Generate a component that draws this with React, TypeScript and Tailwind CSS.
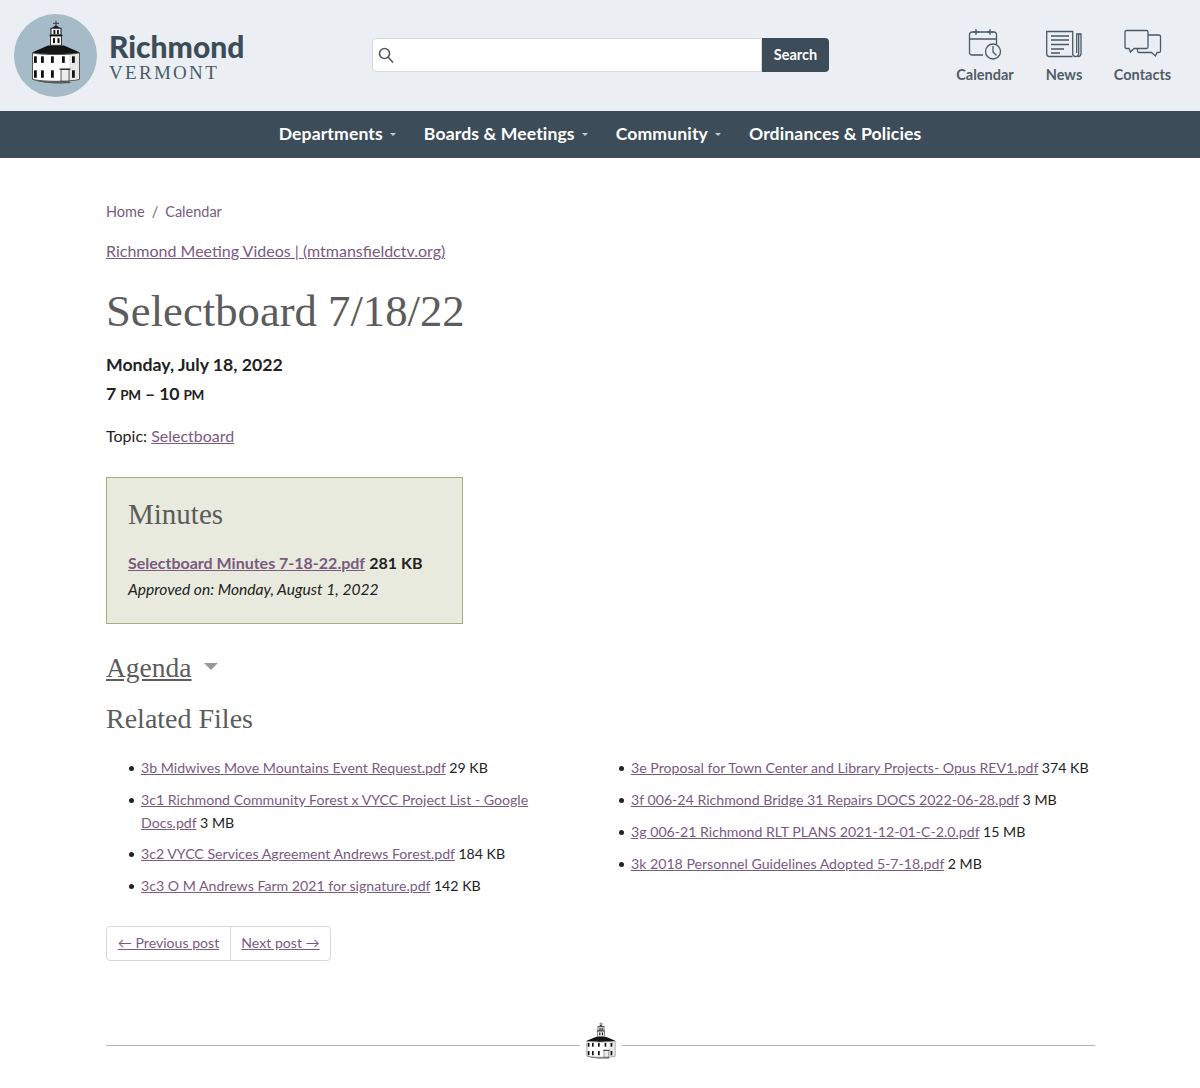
const serif = "font-['Liberation_Serif',serif]"

function MeetingHouse({ className }: { className?: string }) {
  return (
    <svg viewBox="0 0 50 80" preserveAspectRatio="none" className={className}>
      <path d="M25 1v6M22 4h6" stroke="#333" strokeWidth="1" fill="none" />
      <path d="M20.5 10 25 6l4.500 4z" fill="#222" />
      <rect x="20" y="10" width="10" height="8" fill="#f4f4f4" stroke="#111" strokeWidth="1" />
      <rect x="22.500" y="12" width="1.800" height="5" fill="#111" />
      <rect x="26" y="12" width="1.800" height="5" fill="#111" />
      <rect x="18.500" y="18" width="13" height="1.500" fill="#111" />
      <rect x="19.500" y="19.500" width="11" height="11" fill="#f8f8f8" stroke="#111" strokeWidth="0.800" />
      <rect x="22" y="22" width="2" height="6" fill="#111" />
      <rect x="26.500" y="22" width="2" height="6" fill="#111" />
      <path d="M1 39.500 17 31h16l16 8.500c-8 2.500-40 2.500-48 0z" fill="#151515" />
      <path d="M1.500 40c8 2.500 39 2.500 47 0v32c-10 3-37 3-47 0z" fill="#fff" stroke="#222" strokeWidth="0.800" />
      <path d="M38 43v30l10-2V41z" fill="#ddd" opacity="0.700" />
      {[3, 10, 20, 31, 41].map((x) => (
        <rect key={x} x={x} y="44" width="2.800" height="8" fill="#111" />
      ))}
      {[3, 10, 20, 41].map((x) => (
        <rect key={x} x={x} y="61" width="2.800" height="9" fill="#111" />
      ))}
      <path d="M30 60h8v14h-8z" fill="#eee" stroke="#222" strokeWidth="0.800" />
      <path d="M28.500 59.500h11" stroke="#111" strokeWidth="1.400" />
      <path d="M2 72c10 3 26 3 36 2l2 2.500c-12 1-30 .500-38-4.500z" fill="#555" />
    </svg>
  )
}

function CalendarIcon() {
  return (
    <svg viewBox="0 0 34 32" className="h-8 w-[34px] fill-none stroke-[#4a5a66] stroke-[1.300]">
      <path d="M15 27H4a2.500 2.500 0 0 1-2.500-2.500V6.500A2.500 2.500 0 0 1 4 4h22a2.500 2.500 0 0 1 2.500 2.500V16" />
      <path d="M1.500 11h27M8 1v6M22 1v6M5 4h6M19 4h6" />
      <circle cx="25" cy="23.500" r="7.500" />
      <path d="M25 18v6l3.500 3.500" />
    </svg>
  )
}

function NewsIcon() {
  return (
    <svg viewBox="0 0 36 30" className="h-[30px] w-9 fill-none stroke-[#4a5a66] stroke-[1.300]">
      <path d="M26.500 27.500H3A2.500 2.500 0 0 1 .700 25V2.500h26v22a3.200 3.200 0 0 0 3 3.200 3.200 3.200 0 0 0 3-3.200V5h-2v19" />
      <path d="M33 5h2v19.500a3.300 3.300 0 0 1-3 3.200" />
      <path d="M5 7h18M5 11h18M5 15.500h18M5 20h13M5 24h9" strokeWidth="1.500" />
    </svg>
  )
}

function ChatIcon() {
  return (
    <svg viewBox="0 0 38 30" className="h-[30px] w-[38px] fill-none stroke-[#4a5a66] stroke-[1.300]">
      <path d="M2.500 1.500h20a1.500 1.500 0 0 1 1.500 1.500v15a1.500 1.500 0 0 1-1.500 1.500H10l-3.500 3.500-1.500-3.500H2.500A1.500 1.500 0 0 1 1 18V3a1.500 1.500 0 0 1 1.500-1.500z" />
      <path d="M24 6h11a1.500 1.500 0 0 1 1.500 1.500V22a1.500 1.500 0 0 1-1.500 1.500h-2l-1.500 3.500-4-3.500H15a1.500 1.500 0 0 1-1.500-1.500v-2.500" />
    </svg>
  )
}

function Logo() {
  return (
    <div className="flex items-center">
      <div className="flex h-[83px] w-[83px] items-center justify-center rounded-full bg-[#a5bbc7]">
        <MeetingHouse className="mb-[5px] h-[66px] w-[50px]" />
      </div>
      <div className="ml-3 flex flex-col pt-[3px]">
        <span className="text-[30px] leading-[30px] font-black text-[#3c4c58]">Richmond</span>
        <span className={`${serif} mt-[2px] text-[19px] leading-[20px] tracking-[2.3px] text-[#4a5a66]`}>VERMONT</span>
      </div>
    </div>
  )
}

function HeaderLink({ icon, label, width }: { icon: React.ReactNode; label: string; width: string }) {
  return (
    <a className={`flex flex-col items-center ${width}`}>
      <span className="mt-[1px] flex h-[34px] items-center">{icon}</span>
      <span className="mt-[4px] text-[14.5px] leading-[20px] font-bold text-[#505d68]">{label}</span>
    </a>
  )
}

function NavItem({ label, caret = true }: { label: string; caret?: boolean }) {
  return (
    <a className="flex items-center text-[17.6px] font-bold tracking-[0.12px] text-white">
      {label}
      {caret && <span className="mt-[1px] ml-[7px] h-0 w-0 border-x-[3.5px] border-t-[3.5px] border-x-transparent border-t-[#c5ccd1]" />}
    </a>
  )
}

function FileLink({ name, size }: { name: string; size: string }) {
  return (
    <li className="flex">
      <span className="mt-[10px] mr-[7px] h-[5px] w-[5px] shrink-0 rounded-full bg-[#222]" />
      <span>
        <a className="text-[#7a5a7f] underline">{name}</a> {size}
      </span>
    </li>
  )
}

export default function App() {
  return (
    <div className="min-h-[1088px] overflow-hidden bg-white font-['Lato',sans-serif] text-[#222]">
      <header className="flex h-[111px] items-center bg-[#ebeff3] pr-[29px] pl-[14px]">
        <div className="w-[358px]">
          <Logo />
        </div>
        <div className="mb-[2px] flex h-[34px] w-[457px]">
          <div className="flex flex-1 items-center rounded-l-[4px] border border-[#d5dade] bg-white pl-[5px]">
            <svg viewBox="0 0 16 16" className="h-[16px] w-[16px] fill-none stroke-[#4a5a66] stroke-[1.600]">
              <circle cx="6.500" cy="6.500" r="5" />
              <path d="m10 10 5 5.500" />
            </svg>
          </div>
          <button className="w-[67px] rounded-r-[4px] bg-[#3c4c58] text-[14.5px] font-bold text-white">Search</button>
        </div>
        <div className="ml-auto flex items-start">
          <HeaderLink icon={<CalendarIcon />} label="Calendar" width="w-[58px]" />
          <span className="w-[32px]" />
          <HeaderLink icon={<NewsIcon />} label="News" width="w-[36px]" />
          <span className="w-[32px]" />
          <HeaderLink icon={<ChatIcon />} label="Contacts" width="w-[57px]" />
        </div>
      </header>

      <nav className="flex h-[47px] items-center justify-center gap-[28px] bg-[#3c4c58]">
        <NavItem label="Departments" />
        <NavItem label="Boards & Meetings" />
        <NavItem label="Community" />
        <NavItem label="Ordinances & Policies" caret={false} />
      </nav>

      <main className="pr-[105px] pl-[106px]">
        <div className="mt-[44px] flex gap-[7px] text-[14.5px] leading-[20px] text-[#6a6a6a]">
          <a className="text-[#7a5a7f]">Home</a>
          <span>/</span>
          <a className="text-[#7a5a7f]">Calendar</a>
        </div>
        <a className="mt-[18px] block text-[16px] leading-[22px] text-[#7a5a7f] underline">Richmond Meeting Videos | (mtmansfieldctv.org)</a>

        <h1 className={`${serif} mt-[23px] text-[44.7px] leading-[52px] text-[#5c5c5c]`}>Selectboard 7/18/22</h1>

        <div className="mt-[13px] text-[17.7px] leading-[29px] font-bold">
          <div>Monday, July 18, 2022</div>
          <div className="tracking-[-0.2px]">
            7 <span className="text-[13.5px] uppercase">pm</span> – 10 <span className="text-[13.5px] uppercase">pm</span>
          </div>
        </div>

        <div className="mt-[13px] text-[16px] leading-[26px]">
          Topic: <a className="text-[#7a5a7f] underline">Selectboard</a>
        </div>

        <section className="mt-[28px] h-[147px] w-[357px] border border-[#a5ae80] bg-[#e8eade] px-[21px] pt-[19px]">
          <h2 className={`${serif} text-[29px] leading-[34px] text-[#5c5c5c]`}>Minutes</h2>
          <div className="mt-[19px] text-[16px] leading-[26px]">
            <a className="font-bold text-[#7a5a7f] underline">Selectboard Minutes 7-18-22.pdf</a> <span className="font-bold">281 KB</span>
          </div>
          <div className="text-[15.6px] leading-[26px] italic">Approved on: Monday, August 1, 2022</div>
        </section>

        <div className="mt-[26px] flex items-center">
          <a className={`${serif} text-[27.5px] leading-[36px] text-[#5c5c5c] underline`}>Agenda</a>
          <span className="mb-[4px] ml-[12px] h-0 w-0 border-x-[7px] border-t-[7px] border-x-transparent border-t-[#999]" />
        </div>

        <h2 className={`${serif} mt-[15px] text-[28px] leading-[36px] text-[#5c5c5c]`}>Related Files</h2>

        <div className="mt-[19px] grid grid-cols-[490px_1fr] text-[14.15px] leading-[23px]">
          <ul className="flex flex-col gap-[8.5px] pr-[50px] pl-[23px]">
            <FileLink name="3b Midwives Move Mountains Event Request.pdf" size="29 KB" />
            <FileLink name="3c1 Richmond Community Forest x VYCC Project List - Google Docs.pdf" size="3 MB" />
            <FileLink name="3c2 VYCC Services Agreement Andrews Forest.pdf" size="184 KB" />
            <FileLink name="3c3 O M Andrews Farm 2021 for signature.pdf" size="142 KB" />
          </ul>
          <ul className="flex flex-col gap-[9px] pl-[23px]">
            <FileLink name="3e Proposal for Town Center and Library Projects- Opus REV1.pdf" size="374 KB" />
            <FileLink name="3f 006-24 Richmond Bridge 31 Repairs DOCS 2022-06-28.pdf" size="3 MB" />
            <FileLink name="3g 006-21 Richmond RLT PLANS 2021-12-01-C-2.0.pdf" size="15 MB" />
            <FileLink name="3k 2018 Personnel Guidelines Adopted 5-7-18.pdf" size="2 MB" />
          </ul>
        </div>

        <div className="mt-[29px] flex h-[35px] w-[225px] rounded-[4px] border border-[#d8d8d8] text-[14.1px] text-[#7a5a7f]">
          <a className="flex w-[124px] items-center justify-center border-r border-[#d8d8d8] underline">← Previous post</a>
          <a className="flex flex-1 items-center justify-center underline">Next post →</a>
        </div>

        <div className="mt-[61px] flex items-center gap-[6px]">
          <div className="mt-[9px] h-px flex-1 bg-[#aeb4b8]" />
          <MeetingHouse className="h-[38px] w-[30px]" />
          <div className="mt-[9px] h-px flex-1 bg-[#aeb4b8]" />
        </div>
      </main>
    </div>
  )
}
